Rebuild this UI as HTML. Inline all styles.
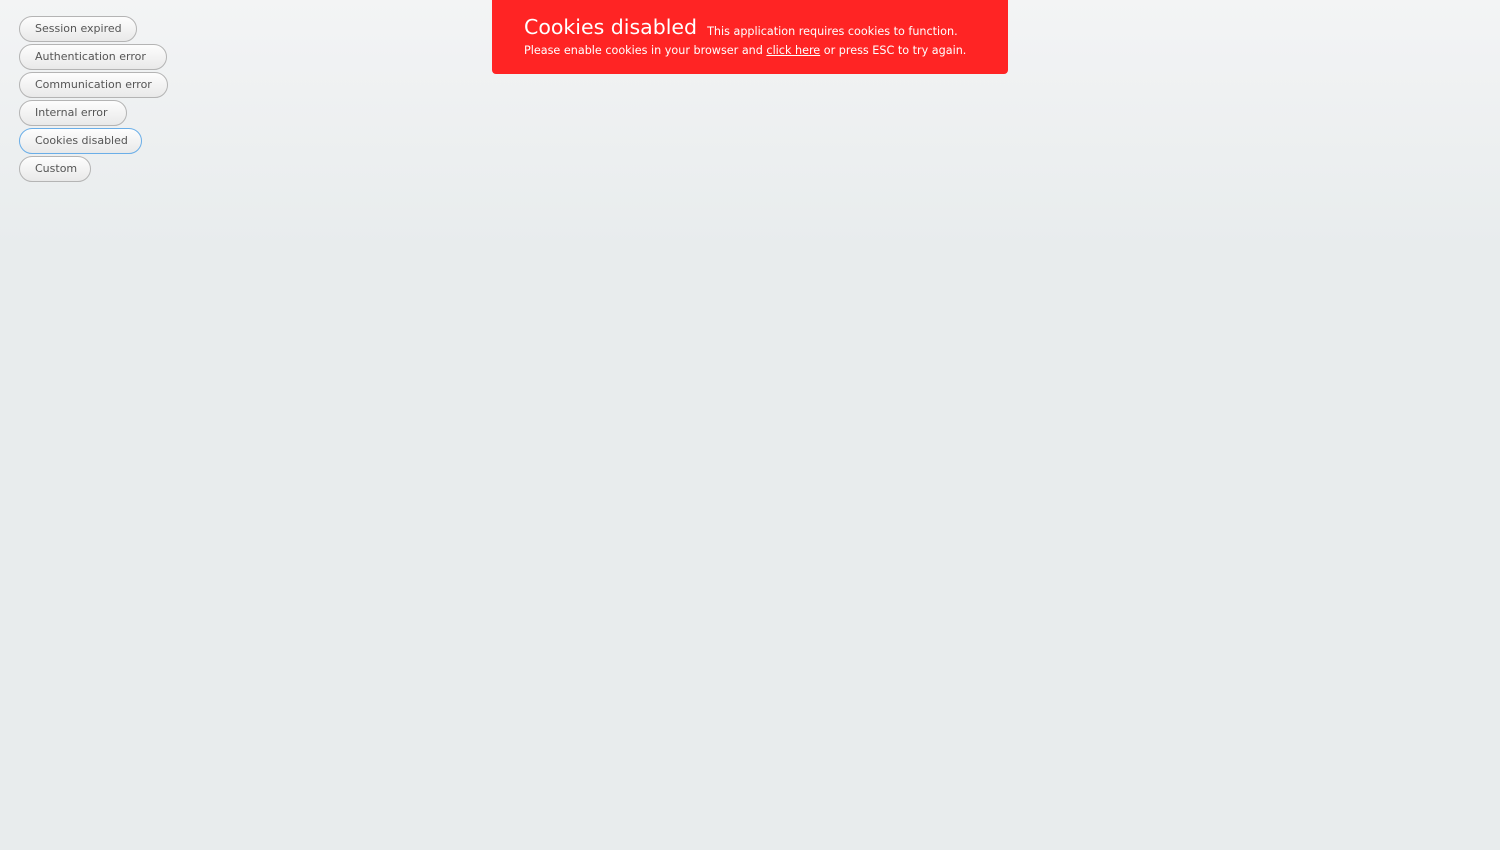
<!DOCTYPE html>
<html><head><style>
html,body{margin:0;height:100%;}
body{width:1500px;height:850px;background:linear-gradient(#f3f4f5 0,#e8eced 250px,#e8eced 850px);font-family:"DejaVu Sans","Liberation Sans",sans-serif;position:relative;overflow:hidden;}
.b{position:absolute;left:19px;height:26px;box-sizing:border-box;border:1px solid #b4b4b4;border-radius:13px;background:linear-gradient(#fdfdfd,#e9e9e9);color:#555;font-size:11px;line-height:24px;padding-left:15px;white-space:nowrap;}
.b.f{border-color:#6aaee8;}
#n{position:absolute;left:492px;top:0;width:516px;height:74px;background:#ff2424;border-radius:0 0 4px 4px;color:#fff;}
#n .t{position:absolute;left:32px;top:15px;font-size:20.5px;white-space:nowrap;}
#n .t span{font-size:11.2px;margin-left:10px;position:relative;top:1px;}
#n .d{position:absolute;left:32px;top:44px;font-size:11.2px;white-space:nowrap;}
#n u{text-decoration:underline;}
</style></head><body>
<div class="b" style="top:16px;width:118px">Session expired</div>
<div class="b" style="top:44px;width:148px">Authentication error</div>
<div class="b" style="top:72px;width:149px">Communication error</div>
<div class="b" style="top:100px;width:108px">Internal error</div>
<div class="b f" style="top:128px;width:123px">Cookies disabled</div>
<div class="b" style="top:156px;width:72px">Custom</div>
<div id="n"><div class="t">Cookies disabled<span>This application requires cookies to function.</span></div>
<div class="d">Please enable cookies in your browser and <u>click here</u> or press ESC to try again.</div></div>
</body></html>
